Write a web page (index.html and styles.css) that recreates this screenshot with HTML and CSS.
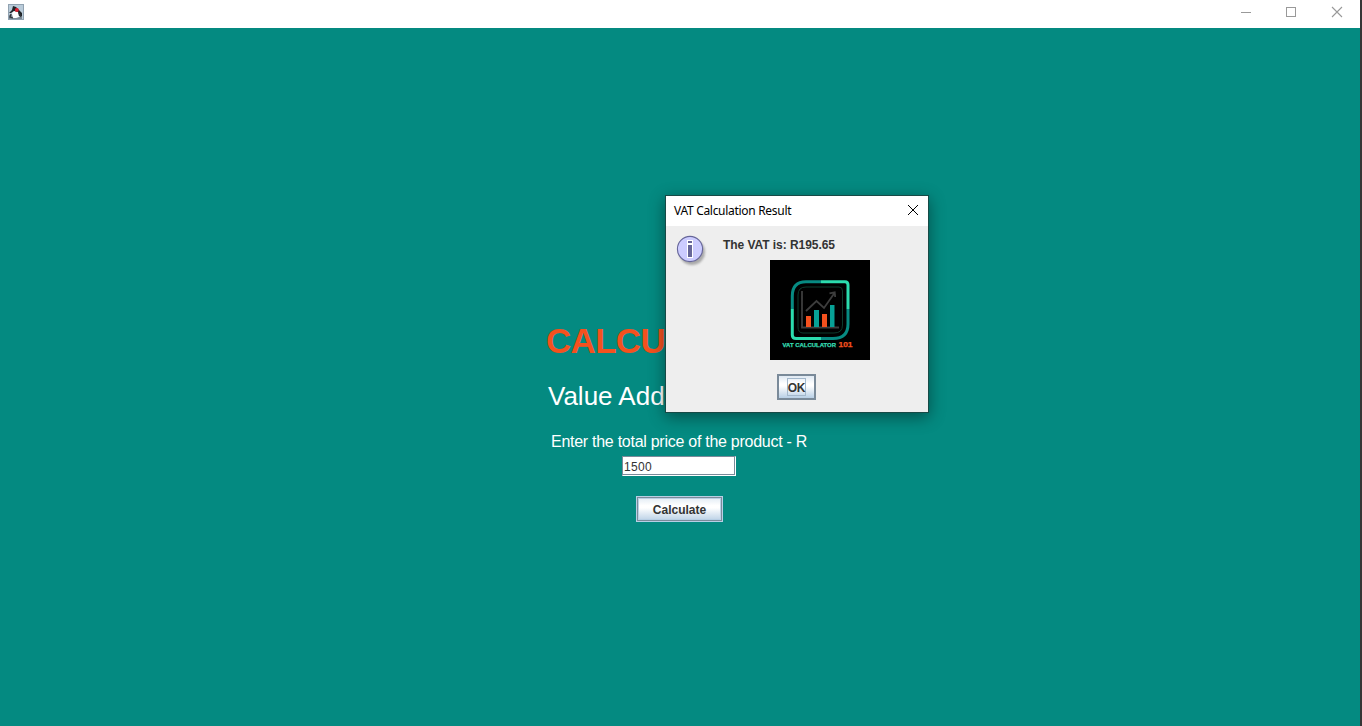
FILE: index.html
```html
<!DOCTYPE html>
<html lang="en">
<head>
<meta charset="utf-8">
<title>VAT Calculator</title>
<link rel="stylesheet" href="styles.css">
</head>
<body>
<div class="window">
  <header class="titlebar">
    <svg class="app-icon" width="16" height="16" viewBox="0 0 16 16">
      <rect width="16" height="16" fill="#b9cbd9"/>
      <rect x=".5" y=".5" width="15" height="15" fill="none" stroke="#91a2b1"/>
      <path d="M1 11L4 10L6 14L14 12V15H1z" fill="#7c8995"/>
      <path d="M5 7H10L11 13L8 14L5 14L4 10z" fill="#fff"/>
      <path d="M5 2L8 3L11 6L14 9L14 12L11 12L10 8L6 7L3 9L1 9L4 6z" fill="#202428"/>
      <path d="M3 10L2 13L5 14M11 9L13 13" fill="none" stroke="#303539" stroke-width="1.2"/>
      <circle cx="8.8" cy="6" r="2" fill="#dc2032"/>
    </svg>
    <svg class="controls" width="104" height="12" viewBox="0 0 104 12" fill="none" stroke="#999">
      <path d="M1 6.5H11"/>
      <rect x="46.5" y="1.5" width="9" height="9"/>
      <path d="M92 1L102 11M102 1L92 11" stroke-width="1.1"/>
    </svg>
  </header>
  <main class="content">
    <h1 class="heading">CALCU</h1>
    <p class="subheading">Value Add</p>
    <label class="prompt" for="price">Enter the total price of the product - R</label>
    <input class="price" id="price" value="1500">
    <button class="calculate">Calculate</button>
  </main>
</div>
<section class="dialog">
  <header class="dialog-bar">
    <span class="dialog-title">VAT Calculation Result</span>
    <svg width="12" height="12" viewBox="0 0 12 12" stroke="#000" stroke-width="1"><path d="M1 1L11 11M11 1L1 11"/></svg>
  </header>
  <div class="dialog-body">
    <svg class="info" width="32" height="32" viewBox="0 0 32 32">
      <defs><filter id="soft"><feGaussianBlur stdDeviation="1.2"/></filter></defs>
      <circle cx="16" cy="17" r="13" fill="#999" opacity=".8" filter="url(#soft)"/>
      <circle cx="14" cy="14" r="12.6" fill="#ccf" stroke="#669" stroke-width="1.1"/>
      <path d="M11 5h6v5h-6zM11 9h6v14h-6z" fill="#fff"/>
      <path d="M12 6h4v2h-4zM12 10h4v12h-4z" fill="#669"/>
    </svg>
    <div class="message">
      <p class="result">The VAT is: R195.65</p>
      <svg class="logo" width="100" height="100" viewBox="0 0 100 100">
        <rect width="100" height="100"/>
        <g fill="none" stroke-width="3">
          <path d="M22.3 49V36Q22.3 21.8 36 21.8H51" stroke="#078b82"/>
          <path d="M51 21.8H75Q78 21.8 78 25V49" stroke="#2bdcae"/>
          <path d="M78 49V64Q78 78.5 63 78.5H51" stroke="#078b82"/>
          <path d="M51 78.5H26Q22.3 78.5 22.3 75V49" stroke="#2bdcae"/>
          <path d="M28 67V35Q28 27 36 27H69Q72.5 27 72.5 31V65Q72.5 73 64 73H33Q28 73 28 67Z" stroke="#0d3a2c" stroke-width="1"/>
        </g>
        <path d="M32 31V67.5H69M36 51L46.5 41L54 48L64.5 33M59.5 33.3L64.7 32.3L65.2 37" fill="none" stroke="#3d3d3d" stroke-width="1.8"/>
        <path d="M36 56h5v11h-5zM52 54h5v13h-5z" fill="#f4511e"/>
        <path d="M44 50h5v17h-5zM60 45h4.5v22H60z" fill="#07a095"/>
        <text class="logo-name" x="12.5" y="87.3" textLength="53.5" lengthAdjust="spacingAndGlyphs">VAT CALCULATOR</text>
        <text class="logo-number" x="68.5" y="87.3" textLength="14" lengthAdjust="spacingAndGlyphs">101</text>
      </svg>
    </div>
    <button class="ok"><span class="ok-label">OK</span></button>
  </div>
</section>
</body>
</html>
```
FILE: styles.css
```css
* { box-sizing: border-box; }
body { margin: 0; overflow: hidden; font-family: "Liberation Sans", Arial, sans-serif; }
.window { height: 726px; background: #048a81; border-right: 2px solid #353535; }
.titlebar { height: 28px; background: #fff; display: flex; justify-content: space-between; padding: 4px 16px 0 8px; }
.controls { margin-top: 2px; }
.content { display: flex; flex-direction: column; align-items: flex-start; padding: 292px 0 0 546px; }
.heading { margin: 0; font-size: 35px; line-height: 42px; color: #f4511e; letter-spacing: -.7px; }
.subheading { margin: 19px 0 0 2px; font-size: 26px; line-height: 30px; color: #fff; }
.prompt { margin: 22px 0 0 5px; font-size: 16px; line-height: 18px; color: #fff; letter-spacing: -.27px; white-space: nowrap; }
.price { margin: 5px 0 0 76px; width: 114px; height: 20px; padding: 1px 0 0 1px; border: 1px solid; border-color: #7a8a99 #fff #fff #7a8a99; box-shadow: inset -1px -1px #7a8a99, inset 1px 1px #fff; background: #fff; color: #333; font: 12px "Liberation Sans", Arial, sans-serif; letter-spacing: .3px; outline: 0; }
.calculate { margin: 20px 0 0 90px; width: 87px; height: 26px; padding: 2px 0 0; border: 1px solid #b8cfe5; box-shadow: inset 0 0 0 2px #7a8a99; background: linear-gradient(#dfe9f3, #fff 35%, #fff 45%, #b8cfe5); color: #333; font: bold 12px "Liberation Sans", Arial, sans-serif; box-shadow: inset 0 0 0 1px #7a8a99, inset 0 0 0 2px #b8cfe5; }
.dialog { position: absolute; left: 665px; top: 195px; width: 264px; height: 218px; border: 1px solid #174a46; background: #eee; box-shadow: 0 4px 15px rgba(0,0,0,.42); }
.dialog-bar { height: 30px; background: #fff; display: flex; justify-content: space-between; padding: 8px 9px 0 8px; }
.dialog-title { margin-top: -1px; font: 12px/15px "Noto Sans", "Open Sans", sans-serif; letter-spacing: -.3px; white-space: nowrap; }
.dialog-body { display: grid; grid-template-columns: 57px 1fr; }
.info { margin: 9px 0 0 10px; }
.message { padding-top: 12px; }
.result { margin: 0; font-size: 12px; line-height: 14px; font-weight: bold; color: #333; letter-spacing: -.05px; }
.logo { display: block; margin: 8px 0 0 47px; }
.logo-name, .logo-number { font-family: "Liberation Sans", Arial, sans-serif; font-weight: bold; }
.logo-name { font-size: 5.6px; fill: #35dbb2; stroke: #35dbb2; stroke-width: .25px; }
.logo-number { font-size: 7px; fill: #f4511e; stroke: #f4511e; stroke-width: .25px; }
.ok { grid-column: 1 / -1; margin: 14px 0 0 111px; width: 39px; height: 26px; border: 2px solid #7a8a99; background: linear-gradient(#dfe9f3, #fff 35%, #fff 45%, #b8cfe5); padding: 0; display: flex; align-items: center; justify-content: center; }
.ok-label { width: 19px; height: 18px; border: 1px solid #a3b8cc; font: bold 12px/18px "Liberation Sans", Arial, sans-serif; letter-spacing: -.3px; color: #333; display: flex; justify-content: center; }
```
